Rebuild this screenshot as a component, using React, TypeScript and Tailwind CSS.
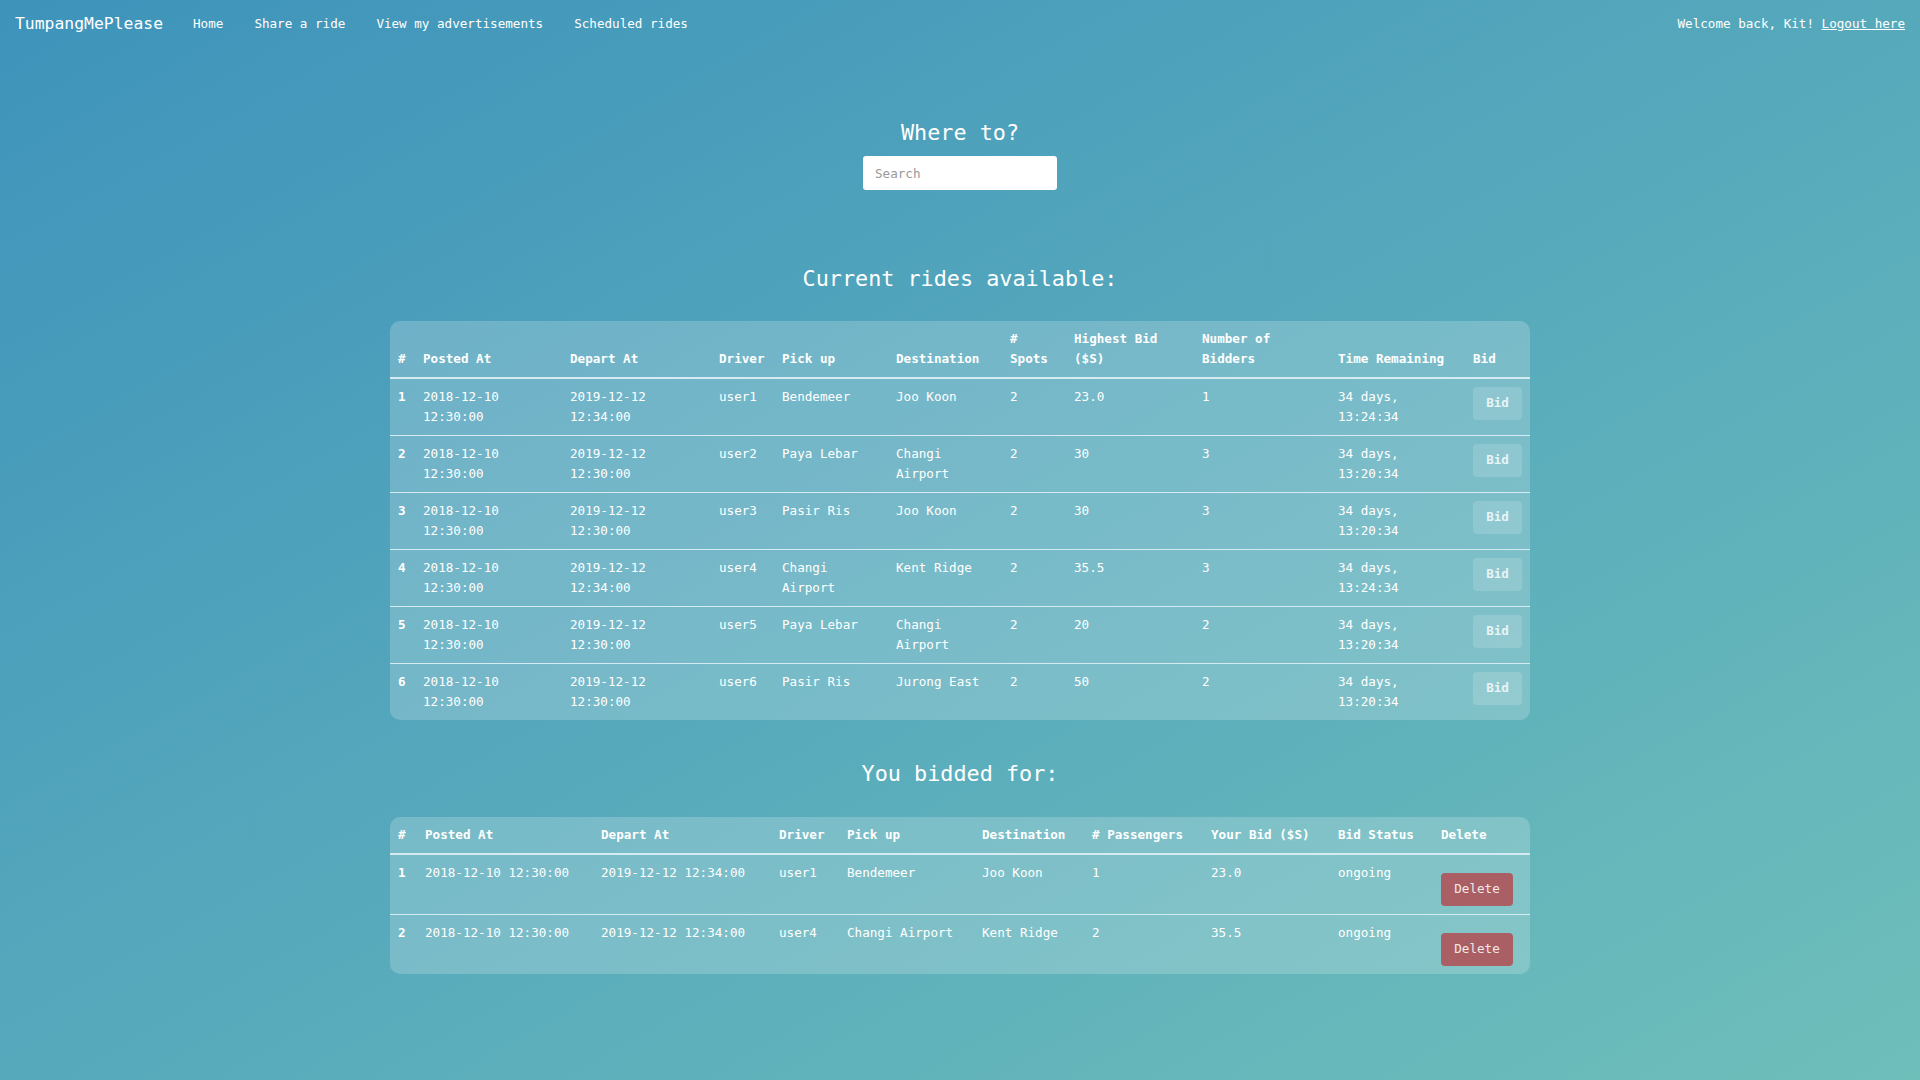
import React from 'react';

const rides = [
  { id: 1, posted: '2018-12-10 12:30:00', depart: '2019-12-12 12:34:00', driver: 'user1', pickup: 'Bendemeer', dest: 'Joo Koon', spots: 2, bid: '23.0', bidders: 1, remaining: '34 days, 13:24:34' },
  { id: 2, posted: '2018-12-10 12:30:00', depart: '2019-12-12 12:30:00', driver: 'user2', pickup: 'Paya Lebar', dest: 'Changi Airport', spots: 2, bid: '30', bidders: 3, remaining: '34 days, 13:20:34' },
  { id: 3, posted: '2018-12-10 12:30:00', depart: '2019-12-12 12:30:00', driver: 'user3', pickup: 'Pasir Ris', dest: 'Joo Koon', spots: 2, bid: '30', bidders: 3, remaining: '34 days, 13:20:34' },
  { id: 4, posted: '2018-12-10 12:30:00', depart: '2019-12-12 12:34:00', driver: 'user4', pickup: 'Changi Airport', dest: 'Kent Ridge', spots: 2, bid: '35.5', bidders: 3, remaining: '34 days, 13:24:34' },
  { id: 5, posted: '2018-12-10 12:30:00', depart: '2019-12-12 12:30:00', driver: 'user5', pickup: 'Paya Lebar', dest: 'Changi Airport', spots: 2, bid: '20', bidders: 2, remaining: '34 days, 13:20:34' },
  { id: 6, posted: '2018-12-10 12:30:00', depart: '2019-12-12 12:30:00', driver: 'user6', pickup: 'Pasir Ris', dest: 'Jurong East', spots: 2, bid: '50', bidders: 2, remaining: '34 days, 13:20:34' },
];

const bids = [
  { id: 1, posted: '2018-12-10 12:30:00', depart: '2019-12-12 12:34:00', driver: 'user1', pickup: 'Bendemeer', dest: 'Joo Koon', passengers: 1, bid: '23.0', status: 'ongoing' },
  { id: 2, posted: '2018-12-10 12:30:00', depart: '2019-12-12 12:34:00', driver: 'user4', pickup: 'Changi Airport', dest: 'Kent Ridge', passengers: 2, bid: '35.5', status: 'ongoing' },
];

const mono = "font-['DejaVu_Sans_Mono','Liberation_Mono',monospace]";

const App: React.FC = () => {
  const th = 'px-[6px] pt-[8px] pb-[8px] align-bottom text-left font-bold leading-[20px]';
  const td = 'px-[6px] pt-[8px] pb-[8px] align-top leading-[20px]';
  // first cell gets a bit more room on its left, like the card's inner padding
  const thFirst = 'pl-[8px] pr-[6px] pt-[8px] pb-[8px] align-bottom text-left font-bold leading-[20px]';
  const tdFirst = 'pl-[8px] pr-[6px] pt-[8px] pb-[8px] align-top leading-[20px] font-bold';

  return (
    <div className={`min-h-screen w-full bg-gradient-to-br from-[#3e93bb] to-[#6ebfba] text-white ${mono}`}>
      {/* Navbar */}
      <nav className="flex items-center justify-between h-[48px] px-[15px]">
        <div className="flex items-center">
          <span className="text-[16.4px] text-white mr-[30px]">TumpangMePlease</span>
          <div className="flex items-center gap-[31px] text-[12.6px] text-white">
            <a>Home</a>
            <a>Share a ride</a>
            <a>View my advertisements</a>
            <a>Scheduled rides</a>
          </div>
        </div>
        <div className="text-[12.6px]">
          Welcome back, Kit! <a className="underline">Logout here</a>
        </div>
      </nav>

      {/* Search */}
      <div className="flex flex-col items-center pt-[69px]">
        <h3 className="text-[21.8px] font-normal leading-[32px]">Where to?</h3>
        <input
          placeholder="Search"
          className="mt-[7px] w-[194px] h-[34px] rounded-[3px] bg-white px-[12px] text-[12.6px] text-gray-700 placeholder:text-[#999] outline-none"
        />
      </div>

      {/* Current rides */}
      <div className="flex flex-col items-center pt-[73px]">
        <h3 className="text-[21.8px] font-normal leading-[32px]">Current rides available:</h3>
        <div className="mt-[26px] w-[1140px] rounded-[10px] bg-white/20 overflow-hidden">
          <table className="w-full table-fixed border-collapse text-[12.6px]">
            <colgroup>
              <col className="w-[27px]" />
              <col className="w-[147px]" />
              <col className="w-[149px]" />
              <col className="w-[63px]" />
              <col className="w-[114px]" />
              <col className="w-[114px]" />
              <col className="w-[64px]" />
              <col className="w-[128px]" />
              <col className="w-[136px]" />
              <col className="w-[135px]" />
              <col />
            </colgroup>
            <thead>
              <tr className="border-b-2 border-[#d4ecf1]">
                <th className={thFirst}>#</th>
                <th className={th}>Posted At</th>
                <th className={th}>Depart At</th>
                <th className={th}>Driver</th>
                <th className={th}>Pick up</th>
                <th className={th}>Destination</th>
                <th className={th}># Spots</th>
                <th className={th}>Highest Bid ($S)</th>
                <th className={th}>Number of Bidders</th>
                <th className={th}>Time Remaining</th>
                <th className={th}>Bid</th>
              </tr>
            </thead>
            <tbody>
              {rides.map((r, i) => (
                <tr key={r.id} className={i < rides.length - 1 ? 'border-b border-[#d4ecf1]' : ''}>
                  <td className={tdFirst}>{r.id}</td>
                  <td className={td}>{r.posted}</td>
                  <td className={td}>{r.depart}</td>
                  <td className={td}>{r.driver}</td>
                  <td className={td}>{r.pickup}</td>
                  <td className={td}>{r.dest}</td>
                  <td className={td}>{r.spots}</td>
                  <td className={td}>{r.bid}</td>
                  <td className={td}>{r.bidders}</td>
                  <td className={td}>{r.remaining}</td>
                  <td className="px-[6px] pt-[8px] pb-[8px] align-top">
                    <button className="h-[33px] w-[49px] rounded-[4px] bg-white/15 text-[12.6px] font-bold text-[#e8f4f6]">Bid</button>
                  </td>
                </tr>
              ))}
            </tbody>
          </table>
        </div>
      </div>

      {/* You bidded for */}
      <div className="flex flex-col items-center pt-[38px] pb-[80px]">
        <h3 className="text-[21.8px] font-normal leading-[32px]">You bidded for:</h3>
        <div className="mt-[27px] w-[1140px] rounded-[10px] bg-white/20 overflow-hidden">
          <table className="w-full table-fixed border-collapse text-[12.6px]">
            <colgroup>
              <col className="w-[29px]" />
              <col className="w-[176px]" />
              <col className="w-[178px]" />
              <col className="w-[68px]" />
              <col className="w-[135px]" />
              <col className="w-[110px]" />
              <col className="w-[119px]" />
              <col className="w-[127px]" />
              <col className="w-[103px]" />
              <col />
            </colgroup>
            <thead>
              <tr className="border-b-2 border-[#d4ecf1]">
                <th className={thFirst}>#</th>
                <th className={th}>Posted At</th>
                <th className={th}>Depart At</th>
                <th className={th}>Driver</th>
                <th className={th}>Pick up</th>
                <th className={th}>Destination</th>
                <th className={th}># Passengers</th>
                <th className={th}>Your Bid ($S)</th>
                <th className={th}>Bid Status</th>
                <th className={th}>Delete</th>
              </tr>
            </thead>
            <tbody>
              {bids.map((b, i) => (
                <tr key={b.id} className={i < bids.length - 1 ? 'border-b border-[#d4ecf1]' : ''}>
                  <td className={tdFirst}>{b.id}</td>
                  <td className={td}>{b.posted}</td>
                  <td className={td}>{b.depart}</td>
                  <td className={td}>{b.driver}</td>
                  <td className={td}>{b.pickup}</td>
                  <td className={td}>{b.dest}</td>
                  <td className={td}>{b.passengers}</td>
                  <td className={td}>{b.bid}</td>
                  <td className={td}>{b.status}</td>
                  <td className="px-[6px] pt-[8px] pb-[8px] align-top">
                    <button className="mt-[10px] h-[33px] w-[72px] rounded-[4px] bg-[#a95f64] text-[12.6px] text-[#f3e8e8]">Delete</button>
                  </td>
                </tr>
              ))}
            </tbody>
          </table>
        </div>
      </div>
    </div>
  );
};

export default App;
